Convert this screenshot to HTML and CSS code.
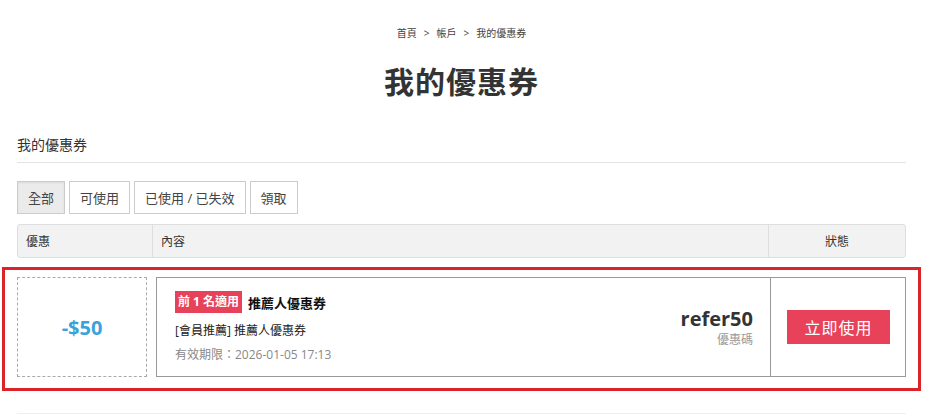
FILE: index.html
```html
<!DOCTYPE html>
<html lang="zh-Hant">
<head>
<meta charset="utf-8">
<link rel="stylesheet" href="styles.css">
</head>
<body>
<div class="page">
  <nav class="crumbs"><span>首頁</span><span class="sep">&gt;</span><span>帳戶</span><span class="sep">&gt;</span><span>我的優惠券</span></nav>
  <h1 class="title">我的優惠券</h1>
  <div class="section-title">我的優惠券</div>
  <div class="tabs">
    <button class="tab active">全部</button>
    <button class="tab">可使用</button>
    <button class="tab">已使用 / 已失效</button>
    <button class="tab">領取</button>
  </div>
  <div class="thead">
    <div class="th c1">優惠</div>
    <div class="th c2">內容</div>
    <div class="th c3">狀態</div>
  </div>
  <div class="row-wrap">
    <div class="row">
      <div class="amount">-$50</div>
      <div class="card">
        <div class="info">
          <div class="name-line"><span class="tag">前 1 名適用</span><span class="name">推薦人優惠券</span></div>
          <div class="desc">[會員推薦] 推薦人優惠券</div>
          <div class="expire">有效期限：2026-01-05 17:13</div>
        </div>
        <div class="code">
          <div class="code-val">refer50</div>
          <div class="code-label">優惠碼</div>
        </div>
        <div class="status"><button class="use">立即使用</button></div>
      </div>
    </div>
    <div class="highlight"></div>
  </div>
  <div class="bottom-line"></div>
</div>
</body>
</html>
```
FILE: styles.css
```css
* { box-sizing: border-box; }
html, body { margin: 0; padding: 0; background: #fff; }
body {
  font-family: "Open Sans", "Noto Sans CJK TC", sans-serif;
  color: #333;
  width: 935px;
  height: 416px;
  overflow: hidden;
}
.page { width: 889px; margin-left: 17px; }
.crumbs {
  padding-top: 26px;
  height: 40px;
  text-align: center;
  font-size: 10px;
  color: #444;
  line-height: 14px;
}
.crumbs .sep { margin: 0 7px; }
.title {
  margin: 0;
  padding-top: 22px;
  text-align: center;
  font-size: 30px;
  line-height: 40px;
  font-weight: bold;
  color: #333;
  letter-spacing: 1px;
}
.section-title {
  margin-top: 33px;
  font-size: 14px;
  line-height: 20px;
  color: #333;
  padding-bottom: 7px;
  border-bottom: 1px solid #e4e4e4;
}
.tabs { display: flex; gap: 4px; margin-top: 18px; }
.tab {
  font-family: inherit;
  font-size: 13px;
  height: 33px;
  padding: 0 10px;
  white-space: nowrap;
  background: #fff;
  border: 1px solid #ccc;
  color: #444;
  margin: 0;
}
.tab.active { background: #ebebeb; box-shadow: inset 0 1px 2px rgba(0,0,0,0.08); }
.thead {
  display: flex;
  margin-top: 10px;
  height: 34px;
  background: #f2f2f2;
  border: 1px solid #dedede;
  border-radius: 3px;
  font-size: 12px;
  color: #333;
}
.th { display: flex; align-items: center; padding-left: 8px; }
.c1 { width: 135px; border-right: 1px solid #dedede; }
.c2 { flex: 1; border-right: 1px solid #dedede; }
.c3 { width: 136px; justify-content: center; padding-left: 0; }
.row-wrap { position: relative; margin-top: 19px; }
.row { display: flex; gap: 9px; height: 100px; }
.amount {
  width: 130px;
  border: 1px dashed #aaa;
  display: flex;
  align-items: center;
  justify-content: center;
  color: #3ba3d9;
  font-weight: bold;
  font-size: 20px;
}
.card { flex: 1; display: flex; border: 1px solid #999; }
.info { flex: 1; padding: 13px 0 0 18px; }
.name-line { display: flex; align-items: center; gap: 6px; height: 22px; }
.tag {
  background: #e8425a;
  color: #fff;
  font-size: 12px;
  font-weight: bold;
  height: 22px;
  line-height: 22px;
  padding: 0 3px;
}
.name { font-size: 13px; font-weight: bold; color: #111; }
.desc { font-size: 12px; margin-top: 9px; line-height: 18px; color: #222; }
.expire { font-size: 12px; margin-top: 6px; line-height: 18px; color: #888; }
.code { text-align: right; padding: 31px 17px 0 0; }
.code-val { font-size: 20px; font-weight: bold; line-height: 20px; color: #333; }
.code-label { font-size: 12px; color: #999; line-height: 14px; margin-top: 4px; }
.status {
  width: 135px;
  border-left: 1px solid #999;
  display: flex;
  align-items: center;
  justify-content: center;
}
.use {
  font-family: inherit;
  margin: 0 0 0 1px;
  width: 103px;
  height: 34px;
  border: 0;
  background: #e8425a;
  color: #fff;
  font-size: 16px;
  letter-spacing: 1px;
}
.highlight {
  position: absolute;
  left: -15px;
  top: -10px;
  width: 919px;
  height: 124px;
  border: 3px solid #d9242a;
  pointer-events: none;
}
.bottom-line { margin-top: 36px; border-top: 1px solid #eee; }
```
